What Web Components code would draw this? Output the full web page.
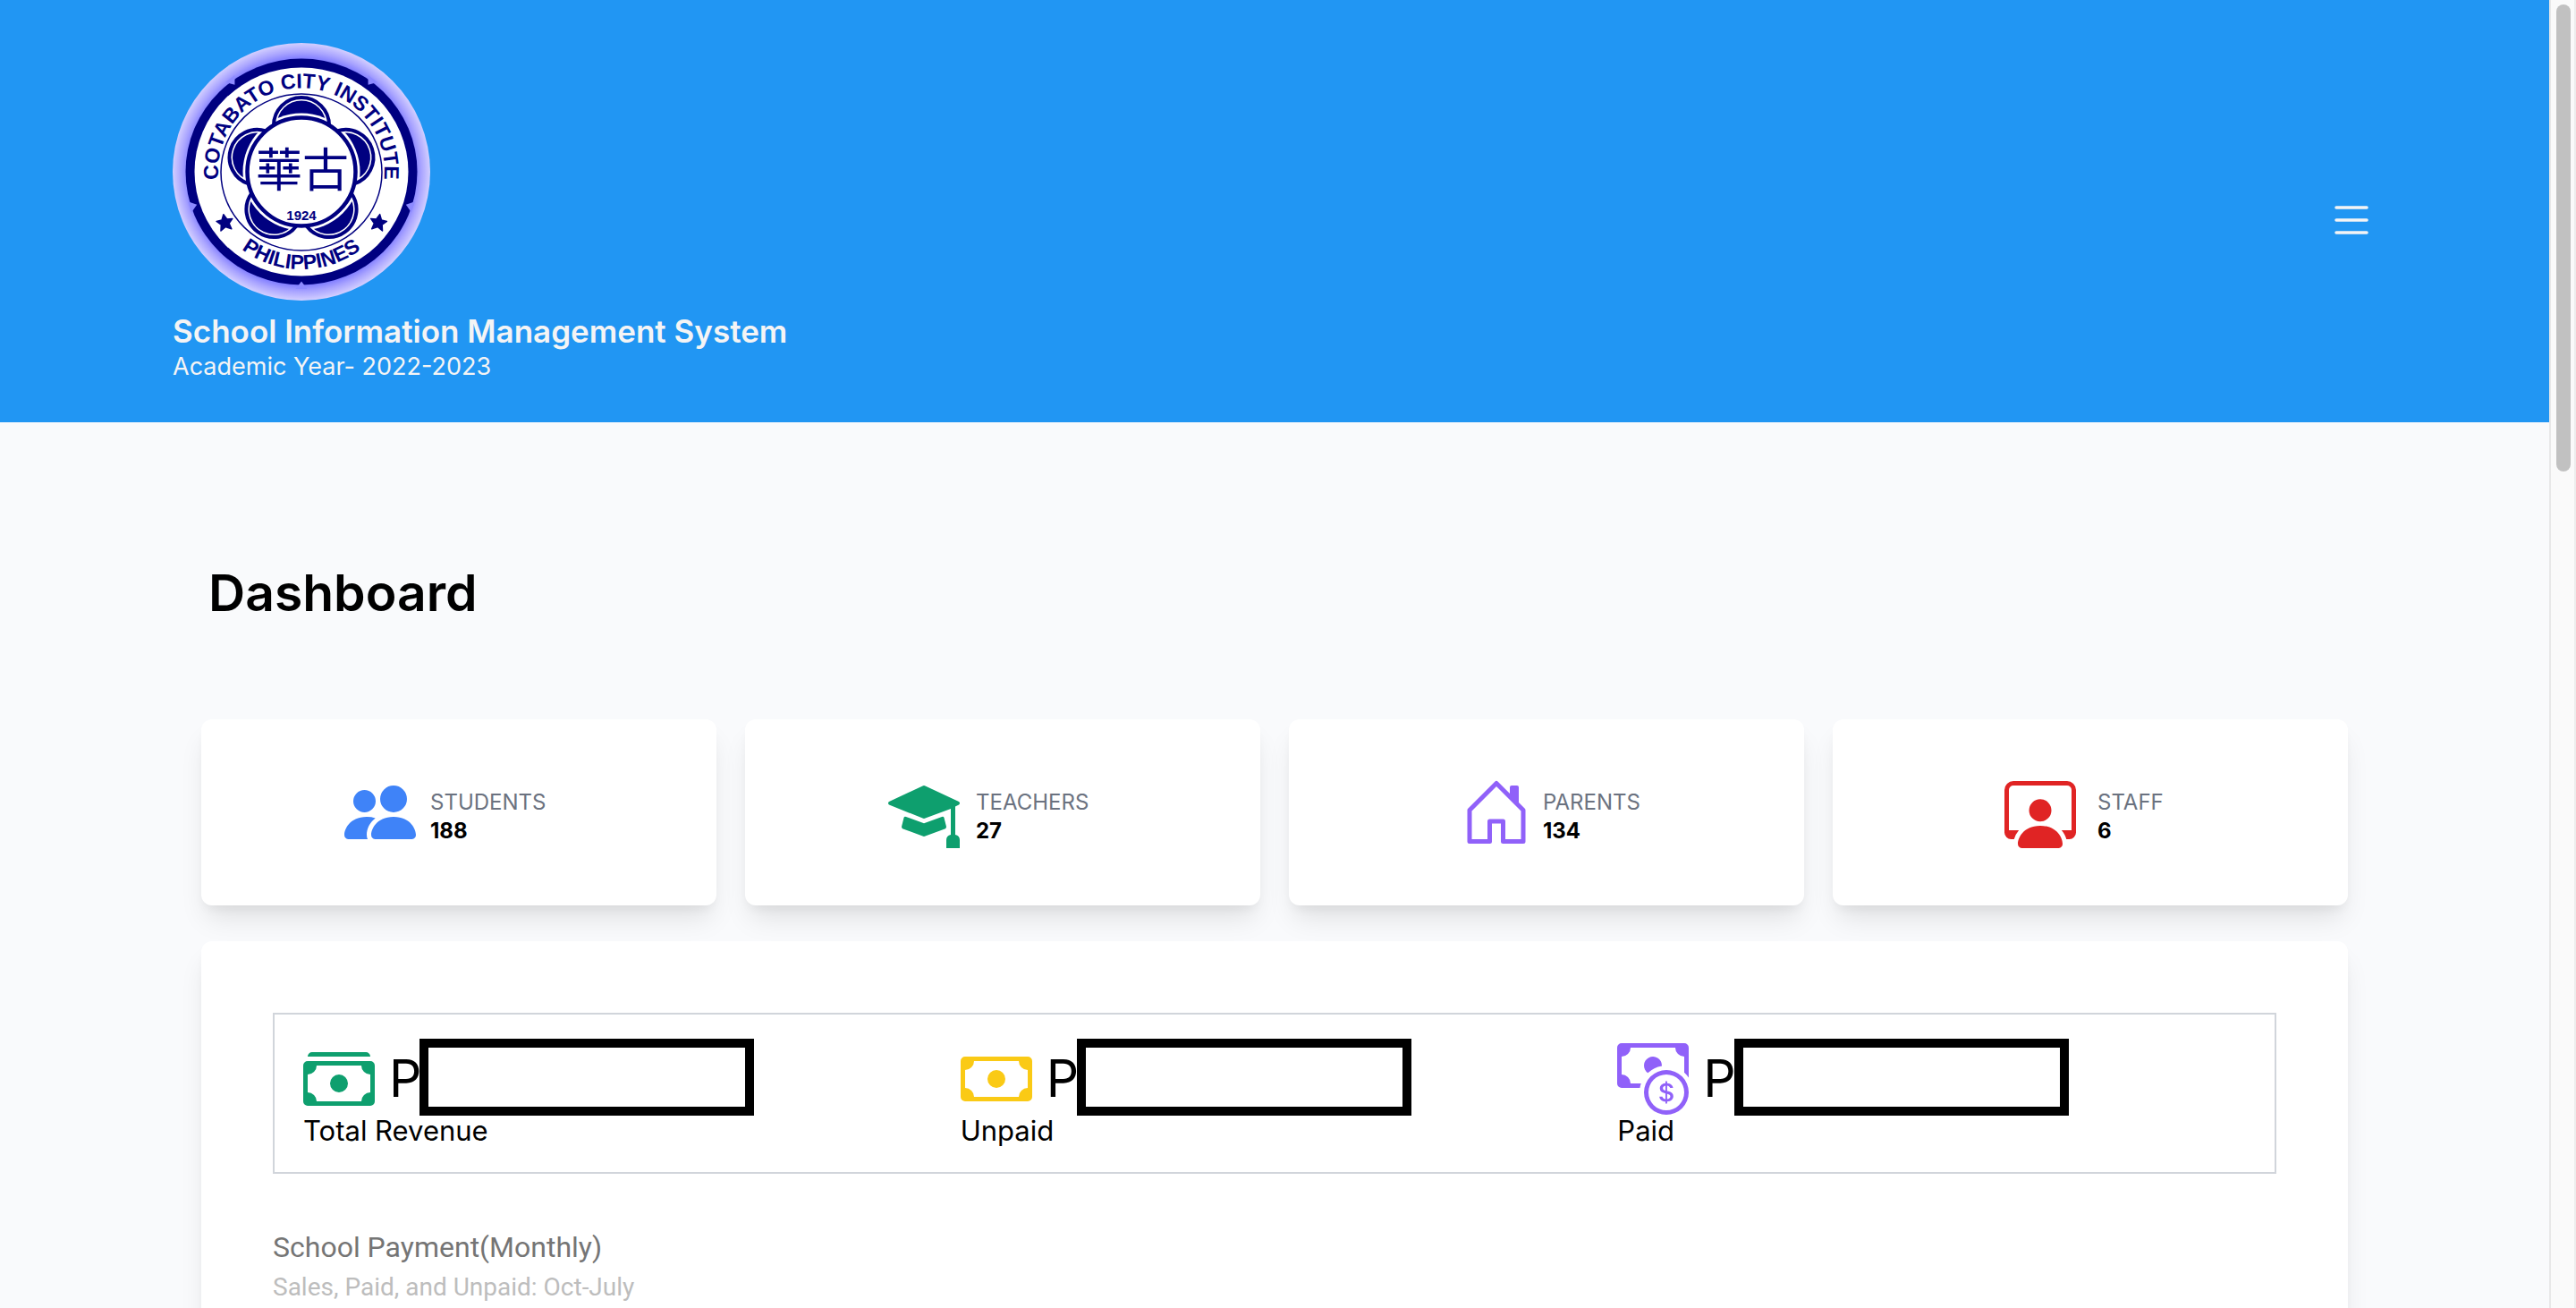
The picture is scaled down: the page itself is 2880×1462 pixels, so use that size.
<!DOCTYPE html>
<html lang="en">
<head>
<meta charset="utf-8">
<title>Dashboard</title>
<style>
  html, body { margin: 0; height: 100%; }
  body { background: #f9fafc; color: #000; font-family: Inter, "Liberation Sans", sans-serif; overflow: hidden; }
</style>
</head>
<body>
<app-shell>
  <site-header slot="header" heading="School Information Management System" year="Academic Year- 2022-2023"></site-header>
  <dashboard-page>
    <stat-card slot="stat" icon="people" label="STUDENTS" value="188" style="--start:160px;--gap:16px;--tone:#3f83f8"></stat-card>
    <stat-card slot="stat" icon="cap" label="TEACHERS" value="27" style="--start:160px;--gap:18px;--tone:#0e9f6e"></stat-card>
    <stat-card slot="stat" icon="house" label="PARENTS" value="134" style="--start:192px;--gap:12px;--tone:#9061f9"></stat-card>
    <stat-card slot="stat" icon="workspace" label="STAFF" value="6" style="--start:192px;--gap:24px;--tone:#e02424"></stat-card>
    <payment-panel>
      <money-total slot="total" icon="stack" label="Total Revenue" style="--tone:#0e9f6e"></money-total>
      <money-total slot="total" icon="cash" label="Unpaid" style="--tone:#faca15"></money-total>
      <money-total slot="total" icon="coin" label="Paid" style="--tone:#9061f9"></money-total>
    </payment-panel>
  </dashboard-page>
</app-shell>

<script>
const define = (name, render) => customElements.define(name, class extends HTMLElement {
  connectedCallback() {
    if (!this.shadowRoot) this.attachShadow({ mode: 'open' }).innerHTML = render(this);
  }
});

const icons = {
  people: '<path d="M7 14s-1 0-1-1 1-4 5-4 5 3 5 4-1 1-1 1H7Zm4-6a3 3 0 1 0 0-6 3 3 0 0 0 0 6Zm-5.784 6A2.238 2.238 0 0 1 5 13c0-1.355.68-2.75 1.936-3.72A6.325 6.325 0 0 0 5 9c-4 0-5 3-5 4s1 1 1 1h4.216ZM4.5 8a2.5 2.5 0 1 0 0-5 2.5 2.5 0 0 0 0 5Z"/>',
  cap: '<g transform="scale(.2)"><path d="M38.500 10.400Q40 9.600 41.500 10.400L79 28Q81 29.700 79 31.500L75 33.600V65Q80 66 80 71V80H65V71Q65 66 70 65V36L41.500 46.600Q40 47.400 38.500 46.600L1 31.500Q-1 29.700 1 28Z"/><path d="M17.500 46Q18 44.400 20 45L40 52.200 60 45Q62 44.400 62.500 46L65 56Q65 57.600 64 58.200L41.500 66.600Q40 67.400 38.500 66.600L16 58.200Q15 57.600 15 56Z"/></g>',
  house: '<g transform="scale(.2)"><path fill="none" stroke="currentColor" stroke-width="5" stroke-linejoin="round" d="M40 7.500 10 37.500V72.500H32.500V50H47.500V72.500H70V37.500Z"/><path d="M55 25V12Q55 10 57 10H63Q65 10 65 12V35Z"/></g>',
  workspace: '<path d="M4 16s-1 0-1-1 1-4 5-4 5 3 5 4-1 1-1 1H4Zm4-5.950a2.500 2.500 0 1 0 0-5 2.500 2.500 0 0 0 0 5Z"/><path d="M2 1a2 2 0 0 0-2 2v9.500A1.500 1.500 0 0 0 1.500 14h.653a5.373 5.373 0 0 1 1.066-2H1V3a1 1 0 0 1 1-1h12a1 1 0 0 1 1 1v9h-2.219c.554.654.89 1.373 1.066 2h.653a1.500 1.500 0 0 0 1.500-1.500V3a2 2 0 0 0-2-2H2Z"/>',
  stack: '<path d="M1 3a1 1 0 0 1 1-1h12a1 1 0 0 1 1 1H1zm7 8a2 2 0 1 0 0-4 2 2 0 0 0 0 4z"/><path d="M0 5a1 1 0 0 1 1-1h14a1 1 0 0 1 1 1v8a1 1 0 0 1-1 1H1a1 1 0 0 1-1-1V5zm3 0a2 2 0 0 1-2 2v4a2 2 0 0 1 2 2h10a2 2 0 0 1 2-2V7a2 2 0 0 1-2-2H3z"/>',
  cash: '<path d="M8 10a2 2 0 1 0 0-4 2 2 0 0 0 0 4z"/><path d="M0 4a1 1 0 0 1 1-1h14a1 1 0 0 1 1 1v8a1 1 0 0 1-1 1H1a1 1 0 0 1-1-1V4zm3 0a2 2 0 0 1-2 2v4a2 2 0 0 1 2 2h10a2 2 0 0 1 2-2V6a2 2 0 0 1-2-2H3z"/>',
  coin: '<path fill-rule="evenodd" d="M11 15a4 4 0 1 0 0-8 4 4 0 0 0 0 8zm5-4a5 5 0 1 1-10 0 5 5 0 0 1 10 0z"/><path d="M9.438 11.944c.047.596.518 1.060 1.363 1.116v.440h.375v-.443c.875-.061 1.386-.529 1.386-1.207 0-.618-.390-.936-1.090-1.100l-.296-.070v-1.200c.376.043.614.248.671.532h.658c-.047-.575-.540-1.024-1.329-1.073V8.500h-.375v.450c-.747.073-1.255.522-1.255 1.158 0 .562.378.920 1.007 1.066l.248.061v1.272c-.384-.058-.639-.270-.696-.563h-.668zm1.360-1.354c-.369-.085-.569-.260-.569-.522 0-.294.216-.514.572-.578v1.100h-.003zm.432.746c.449.104.655.272.655.569 0 .339-.257.571-.709.614v-1.195l.054.012z"/><path d="M1 0a1 1 0 0 0-1 1v8a1 1 0 0 0 1 1h4.083c.058-.344.145-.678.258-1H3a2 2 0 0 0-2-2V3a2 2 0 0 0 2-2h10a2 2 0 0 0 2 2v3.528c.380.340.717.728 1 1.154V1a1 1 0 0 0-1-1H1z"/><path d="M9.998 5.083 10 5a2 2 0 1 0-3.132 1.650 5.982 5.982 0 0 1 3.130-1.567z"/>'
};
const icon = name => `<svg class="icon" viewBox="0 0 16 16" fill="currentColor" aria-hidden="true">${icons[name]}</svg>`;

define('app-shell', () => `
  <style>
    :host { display: flex; height: 100vh; overflow: hidden; }
    .page { flex: 1; min-width: 0; overflow: hidden; }
  </style>
  <div class="page"><slot name="header"></slot><slot></slot></div>
  <page-scrollbar></page-scrollbar>`);

define('page-scrollbar', () => `
  <style>
    :host { display: block; box-sizing: border-box; width: 30px; padding: 5px 4px 0 6px; background: #fafafa;
            border-left: 2px solid #e8e8e8; border-right: 2px solid #ededed; }
    .thumb { height: 522px; border-radius: 8px; background: #c1c1c1; }
  </style>
  <div class="thumb"></div>`);

define('school-seal', () => {
  const turns = [0, 72, 144, 216, 288];
  const each = (list, shape) => list.map(a => `<g transform="rotate(${a} 144 144)">${shape}</g>`).join('');
  const star = (x, y, turn) => `<path fill="#000080" stroke="#000080" stroke-width="1.500" stroke-linejoin="round" transform="translate(${x} ${y}) rotate(${turn})" d="M0-9.500 2.900-3.500 9-3.100 4.500 1.500 6 8 0 4.600-6 8-4.500 1.500-9-3.100-2.900-3.500Z"/>`;
  return `
  <style>
    :host { display: block; width: 288px; height: 288px; }
    svg { display: block; width: 100%; height: 100%; }
    text { fill: #000080; font-family: "Liberation Sans", Arial, sans-serif; font-weight: 700; }
    .ring { font-size: 23px; }
    .year { font-size: 15px; }
    .han { font-family: "Noto Sans CJK TC", "Noto Sans CJK JP", sans-serif; font-weight: 400; font-size: 52px; }
  </style>
  <svg viewBox="0 0 288 288" role="img" aria-label="School seal">
    <defs>
      <radialGradient id="glow" gradientUnits="userSpaceOnUse" cx="144" cy="144" r="144">
        <stop offset=".87" stop-color="#7b78ff"/><stop offset=".93" stop-color="#a9a4ff"/><stop offset="1" stop-color="#d3cfff"/>
      </radialGradient>
      <path id="top-arc" d="M52.500 160A93 93 0 1 1 235.500 160"/>
      <path id="low-arc" d="M34 144A110 109 0 0 0 254 144"/>
    </defs>
    <circle cx="144" cy="144" r="144" fill="url(#glow)"/>
    <ellipse cx="144" cy="144" rx="129.500" ry="126.500" fill="#000080"/>
    ${each([-37.5, 37.5, 107.5, 180, 252.5], '<path d="M144 21.500 137.500 13H150.500Z" fill="#8d8aff"/>')}
    <ellipse cx="144" cy="144" rx="119.500" ry="116.500" fill="#fff"/>
    <ellipse cx="144" cy="144.500" rx="90" ry="87.500" fill="none" stroke="#000080" stroke-width="1.500"/>
    ${each(turns, '<circle cx="144" cy="92" r="31" fill="#fff"/><circle cx="144" cy="92" r="27.500" fill="#000080"/>')}
    <circle cx="144" cy="144" r="65.500" fill="#fff"/>
    ${each(turns, '<circle cx="144" cy="92" r="31" fill="none" stroke="#000080" stroke-width="4"/>')}
    <circle cx="144" cy="144" r="60.500" fill="#fff" stroke="#000080" stroke-width="4.500"/>
    <text class="ring"><textPath href="#top-arc" startOffset="50%" text-anchor="middle">COTABATO CITY INSTITUTE</textPath></text>
    <text class="ring"><textPath href="#low-arc" startOffset="50%" text-anchor="middle">PHILIPPINES</textPath></text>
    <text class="han" x="145" y="161" text-anchor="middle">華古</text>
    <text class="year" x="144" y="198" text-anchor="middle">1924</text>
    ${star(58.5, 201, -10)}
    ${star(230, 201, 10)}
  </svg>`;
});

define('site-header', el => `
  <style>
    :host { display: flex; align-items: center; justify-content: space-between; box-sizing: border-box;
            padding: 48px 192px 28px 193px; background: #2196f3; color: #f4f4f5; }
    h2, p { margin: 0; }
    .brand { padding-bottom: 16px; }
    h2 { margin-top: 12px; font-size: 35px; line-height: 44px; font-weight: 600; }
    p { font-size: 27px; line-height: 36px; }
    button { display: block; margin: 0; padding: 10px; border: 0; background: none; color: #f4f4f5; }
    button svg { display: block; width: 38px; height: 32px; }
  </style>
  <div class="brand">
    <school-seal></school-seal>
    <h2>${el.getAttribute('heading')}</h2>
    <p>${el.getAttribute('year')}</p>
  </div>
  <button type="button" aria-label="Open menu">
    <svg viewBox="0 0 38 32" fill="none" stroke="currentColor" stroke-width="3.500" stroke-linecap="round"><path d="M2 2H36M2 16H36M2 30H36"/></svg>
  </button>`);

define('dashboard-page', () => `
  <style>
    :host { display: block; padding: 155px 225px 0; }
    h1 { margin: 0 8px 105px; font-size: 57px; line-height: 72px; font-weight: 600; }
    .stats { display: grid; grid-template-columns: repeat(4, 1fr); gap: 32px; margin-bottom: 40px; }
  </style>
  <h1>Dashboard</h1>
  <div class="stats"><slot name="stat"></slot></div>
  <slot></slot>`);

define('stat-card', el => `
  <style>
    :host { display: flex; align-items: center; gap: var(--gap); box-sizing: border-box; padding: 64px 32px 64px var(--start);
            border-radius: 12px; background: #fff;
            box-shadow: 0 20px 30px -6px rgba(0,0,0,.1), 0 8px 12px -4px rgba(0,0,0,.05); }
    .icon { flex: none; width: 80px; height: 80px; color: var(--tone); }
    dl, dt, dd { margin: 0; }
    dl { padding-top: 10px; font-size: 24px; line-height: 32px; }
    dt { color: #6b7280; }
    dd { font-weight: 700; }
  </style>
  ${icon(el.getAttribute('icon'))}
  <dl><dt>${el.getAttribute('label')}</dt><dd>${el.getAttribute('value')}</dd></dl>`);

define('payment-panel', () => `
  <style>
    :host { display: block; padding: 80px; border-radius: 12px; background: #fff;
            box-shadow: 0 20px 30px -6px rgba(0,0,0,.1), 0 8px 12px -4px rgba(0,0,0,.05); }
    .totals { display: grid; grid-template-columns: repeat(3, 1fr); gap: 32px; padding: 31px 32px 29px; border: 2px solid #d1d5db; }
    h2, p { margin: 0; font-family: Roboto, sans-serif; font-weight: 400; }
    h2 { margin-top: 62px; font-size: 32px; line-height: 40px; color: #757575; }
    p { font-size: 28px; line-height: 50px; color: #bdbdbd; }
  </style>
  <div class="totals"><slot name="total"></slot></div>
  <h2>School Payment(Monthly)</h2>
  <p>Sales, Paid, and Unpaid: Oct-July</p>`);

define('money-total', el => `
  <style>
    :host { display: block; }
    .amount { display: flex; align-items: center; }
    .icon { flex: none; width: 80px; height: 80px; margin-right: 16px; color: var(--tone); }
    .unit { font-size: 57px; line-height: 72px; }
    .mask { box-sizing: border-box; width: 374px; height: 86px; margin: -4px 0 0 -2px; border: 10px solid #000; background: #fff; }
    .label { font-size: 31px; line-height: 34px; }
  </style>
  <div class="amount">${icon(el.getAttribute('icon'))}<span class="unit">P</span><span class="mask"></span></div>
  <div class="label">${el.getAttribute('label')}</div>`);
</script>
</body>
</html>
